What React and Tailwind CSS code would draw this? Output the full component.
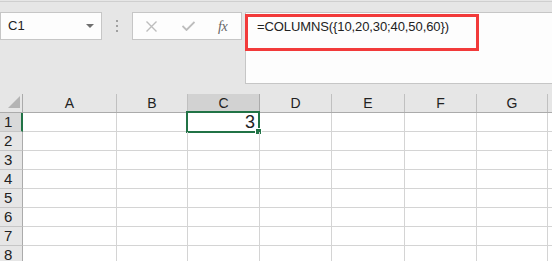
import React from "react";

const cols = [
  { label: "A", w: "w-[94px]" },
  { label: "B", w: "w-[71px]" },
  { label: "C", w: "w-[72px]" },
  { label: "D", w: "w-[72px]" },
  { label: "E", w: "w-[73px]" },
  { label: "F", w: "w-[72px]" },
  { label: "G", w: "w-[71px]" },
];

const rows = [1, 2, 3, 4, 5, 6, 7, 8];

const FormulaBar = () => {
  return (
    <div className="flex items-start pt-[10px]">
      {/* Name box */}
      <div className="flex items-center justify-between w-[102px] h-[28px] border border-[#c6c6c6] bg-[#fdfdfd] pl-[7px] pr-[7px]">
        <span className="text-[13px] text-[#222]">C1</span>
        <svg width="8" height="5" viewBox="0 0 8 5">
          <path d="M0 0 L8 0 L4 4 Z" fill="#6f6f6f" />
        </svg>
      </div>

      {/* Separator dots */}
      <div className="flex flex-col items-center justify-center gap-[3px] w-[30px] h-[28px]">
        <span className="w-[2px] h-[2px] bg-[#a0a0a0]" />
        <span className="w-[2px] h-[2px] bg-[#a0a0a0]" />
        <span className="w-[2px] h-[2px] bg-[#a0a0a0]" />
      </div>

      {/* Cancel / Enter / fx */}
      <div className="flex items-center w-[110px] h-[28px] border border-[#c6c6c6] bg-[#fdfdfd]">
        <svg className="ml-[13px]" width="11" height="11" viewBox="0 0 11 11">
          <path d="M0.5 0.5 L10.5 10.5 M10.5 0.5 L0.5 10.5" stroke="#bdbdbd" strokeWidth="1.4" />
        </svg>
        <svg className="ml-[25px]" width="13" height="10" viewBox="0 0 13 10">
          <path d="M0.5 5 L4.5 9 L12.5 1" stroke="#bdbdbd" strokeWidth="1.8" fill="none" />
        </svg>
        <span className="ml-[23px] text-[14px] italic text-[#666] font-['Liberation_Serif',serif] tracking-[-0.5px]">
          fx
        </span>
      </div>

      {/* Formula input */}
      <div className="ml-[3px] flex-1 h-[72px] border-l border-y border-[#c6c6c6] bg-[#fdfdfd]">
        <div className="ml-[-1px] mt-[1px] w-[234px] h-[37px] border-[3px] border-[#f23a3a]">
          <div className="pl-[9px] pt-[1px] text-[13px] tracking-[-0.1px] leading-[18px] text-[#222]">
            =COLUMNS({"{"}10,20,30;40,50,60{"}"})
          </div>
        </div>
      </div>
    </div>
  );
};

const Grid = () => {
  return (
    <div className="mt-[10px]">
      {/* Column headers */}
      <div className="flex h-[19px] border-b border-[#ababab]">
        <div className="relative w-[23px] border-r border-[#ababab]">
          <svg className="absolute left-[8px] top-[2px]" width="12" height="12" viewBox="0 0 12 12">
            <path d="M12 0 L12 12 L0 12 Z" fill="#b4b4b4" />
          </svg>
        </div>
        {cols.map((c) => (
          <div
            key={c.label}
            className={`${c.w} flex items-center justify-center border-r text-[14px] text-[#222] ${
              c.label === "C" ? "bg-[#d2d2d2] border-[#ababab]" : "border-[#c0c0c0]"
            }`}
          >
            {c.label}
          </div>
        ))}
      </div>

      {/* Rows */}
      {rows.map((r) => (
        <div key={r} className="flex h-[19px] border-b border-[#d4d4d4] bg-white">
          <div
            className={`w-[23px] flex items-center pl-[4px] text-[15px] text-[#222] border-b border-[#c6c6c6] -mb-px ${
              r === 1
                ? "bg-[#d9d9d9] border-r-2 border-r-[#217346]"
                : "bg-[#e6e6e6] border-r border-r-[#ababab]"
            }`}
          >
            {r}
          </div>
          {cols.map((c) => (
            <div key={c.label} className={`${c.w} relative border-r border-[#d4d4d4]`}>
              {r === 1 && c.label === "C" && (
                <div className="absolute left-[-2px] top-[-2px] w-[74px] h-[22px] border-2 border-[#217346] flex items-center justify-end pr-[3px]">
                  <span className="text-[18px] leading-none text-[#222]">3</span>
                  <span className="absolute right-[-4px] bottom-[-4px] w-[7px] h-[7px] bg-[#217346] border border-white" />
                </div>
              )}
            </div>
          ))}
        </div>
      ))}
    </div>
  );
}

export default function App() {
  return (
    <div className="w-[552px] h-[261px] overflow-hidden bg-[#e6e6e6] font-['Liberation_Sans',Arial,sans-serif]">
      <div className="mt-px border-t border-[#cfcfcf]" />
      <FormulaBar />
      <Grid />
    </div>
  );
}
